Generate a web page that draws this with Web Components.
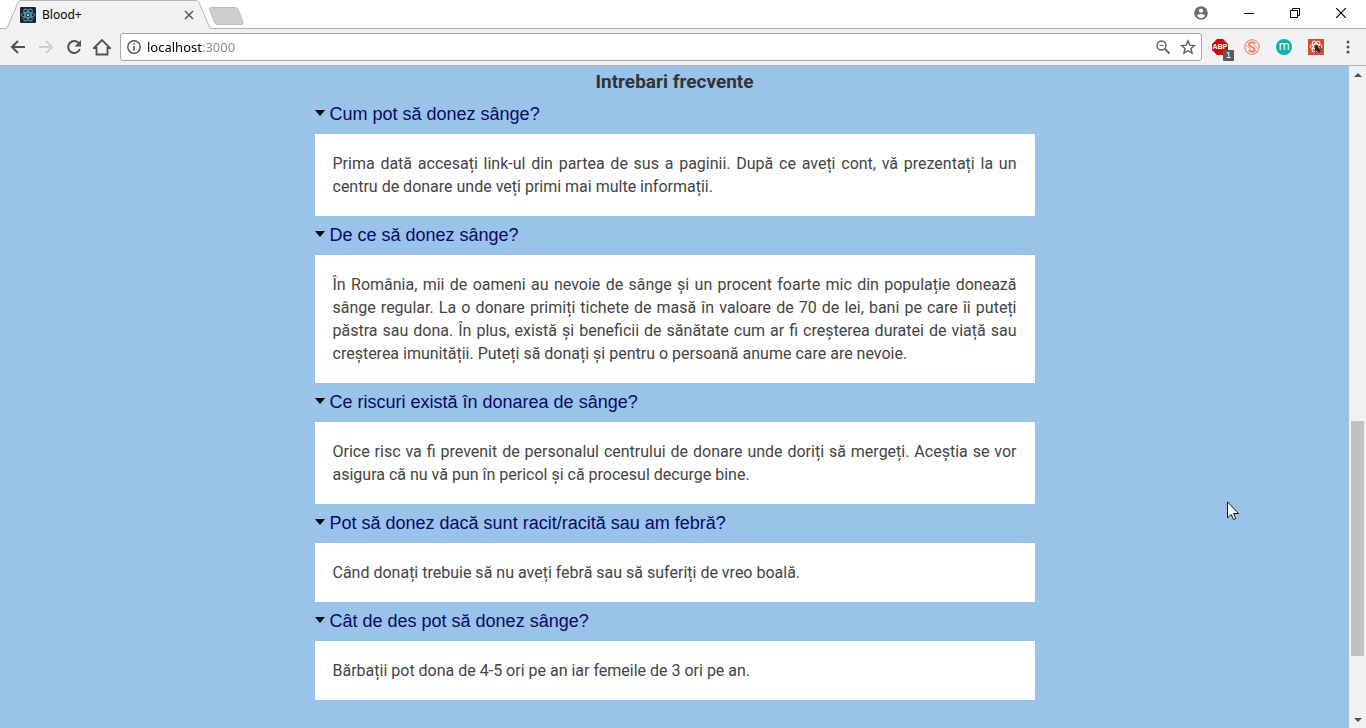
<!DOCTYPE html>
<html lang="ro">
<head>
<meta charset="utf-8">
<title>Blood+</title>
<style>
html, body { margin: 0; height: 100%; }
body { font-family: Roboto, "Liberation Sans", sans-serif; overflow: hidden; }
</style>
</head>
<body>
<browser-window>
  <tab-strip slot="tabs">Blood+</tab-strip>
  <tool-bar slot="toolbar" address="localhost:3000"></tool-bar>
  <faq-list>
    <span slot="title">Intrebari frecvente</span>
    <faq-item><span slot="question">Cum pot să donez sânge?</span>Prima dată accesați link-ul din partea de sus a paginii. După ce aveți cont, vă prezentați la un centru de donare unde veți primi mai multe informații.</faq-item>
    <faq-item><span slot="question">De ce să donez sânge?</span>În România, mii de oameni au nevoie de sânge și un procent foarte mic din populație donează sânge regular. La o donare primiți tichete de masă în valoare de 70 de lei, bani pe care îi puteți păstra sau dona. În plus, există și beneficii de sănătate cum ar fi creșterea duratei de viață sau creșterea imunității. Puteți să donați și pentru o persoană anume care are nevoie.</faq-item>
    <faq-item><span slot="question">Ce riscuri există în donarea de sânge?</span>Orice risc va fi prevenit de personalul centrului de donare unde doriți să mergeți. Aceștia se vor asigura că nu vă pun în pericol și că procesul decurge bine.</faq-item>
    <faq-item><span slot="question">Pot să donez dacă sunt racit/racită sau am febră?</span>Când donați trebuie să nu aveți febră sau să suferiți de vreo boală.</faq-item>
    <faq-item><span slot="question">Cât de des pot să donez sânge?</span>Bărbații pot dona de 4-5 ori pe an iar femeile de 3 ori pe an.</faq-item>
  </faq-list>
  <scroll-rail slot="rail"></scroll-rail>
  <mouse-pointer slot="pointer"></mouse-pointer>
</browser-window>

<template id="window-t">
  <style>
    :host { display: flex; flex-direction: column; height: 100vh; position: relative; background: #99c3e9; }
    main { flex: 1; min-height: 0; display: flex; }
    .view { flex: 1; overflow: hidden; }
  </style>
  <slot name="tabs"></slot>
  <slot name="toolbar"></slot>
  <main><div class="view"><slot></slot></div><slot name="rail"></slot></main>
  <slot name="pointer"></slot>
</template>

<template id="tabs-t">
  <style>
    :host { display: flex; height: 29px; background: #fff; box-shadow: inset 0 -1px #b2b2b2; font: 12px/18px "Noto Sans", sans-serif; color: #000; }
    button { border: 0; padding: 0; background: none; display: block; }
    svg { display: block; }
    .tab { width: 212px; display: grid; }
    .tab > * { grid-area: 1 / 1; }
    .row { display: flex; align-items: center; padding: 1px 16px 0 20px; }
    .name { flex: 1; padding-left: 6px; }
    .new { margin: 7px auto 0 -4px; align-self: flex-start; }
    .controls { display: flex; align-items: center; height: 26px; padding-right: 2px; }
    .controls button { width: 46px; display: grid; place-items: center; }
    .controls .profile { width: 50px; }
  </style>
  <div class="tab">
    <svg width="212" height="29" viewBox="0 0 212 29"><path d="M0 28.5H5Q7 28.5 8 26L18 2.5Q19 .5 21 .5H195Q198 .5 199 2.5L209 26Q210 28.5 212 28.5V29H0z" fill="#f2f2f2"/><path d="M0 28.5H5Q7 28.5 8 26L18 2.5Q19 .5 21 .5H195Q198 .5 199 2.5L209 26Q210 28.5 212 28.5" fill="none" stroke="#b2b2b2"/></svg>
    <div class="row">
      <svg width="16" height="16" viewBox="0 0 16 16"><rect width="16" height="16" rx="1" fill="#20232a"/><g fill="none" stroke="#53a9c4" stroke-width=".9"><ellipse cx="8" cy="8" rx="6.7" ry="2.6"/><ellipse cx="8" cy="8" rx="6.7" ry="2.6" transform="rotate(60 8 8)"/><ellipse cx="8" cy="8" rx="6.7" ry="2.6" transform="rotate(120 8 8)"/></g><circle cx="8" cy="8" r="1.3" fill="#61dafb"/></svg>
      <span class="name"><slot></slot></span>
      <button aria-label="Close tab"><svg width="14" height="14" viewBox="0 0 14 14"><path d="M3 3l8 8M11 3l-8 8" stroke="#555" stroke-width="1.5"/></svg></button>
    </div>
  </div>
  <button class="new" aria-label="New tab"><svg width="36" height="18" viewBox="0 0 36 18"><path d="M3 .5H27Q29 .5 30 2L35 15Q35.500 17.500 33 17.500H10Q7.500 17.500 6.500 15.500L1.500 2.500Q1 .5 3 .5z" fill="#cfcfcf" stroke="#bcbcbc"/></svg></button>
  <div class="controls">
    <button class="profile" aria-label="Profile"><svg width="14" height="14" viewBox="0 0 14 14"><circle cx="7" cy="7" r="6.800" fill="#6e6e6e"/><circle cx="7" cy="4.700" r="2.100" fill="#fff"/><path d="M2.800 9.800Q4 8 7 8T11.200 9.800Q9.500 12.200 7 12.200T2.800 9.800z" fill="#fff"/></svg></button>
    <button aria-label="Minimize"><svg width="10" height="10"><path d="M0 5.500h10" stroke="#000"/></svg></button>
    <button aria-label="Restore"><svg width="10" height="10" fill="none" stroke="#000"><path d="M.5 2.500h7v7h-7zM2.500 2.500v-2h7v7h-2"/></svg></button>
    <button aria-label="Close window"><svg width="10" height="10"><path d="M0 0l10 10M10 0L0 10" stroke="#000" stroke-width="1.200"/></svg></button>
  </div>
</template>

<template id="bar-t">
  <style>
    :host { display: flex; align-items: center; height: 37px; box-sizing: border-box; background: #f2f2f2; border-bottom: 1px solid #b2b2b2; padding: 0 4px; }
    button { border: 0; padding: 0; background: none; display: grid; place-items: center; width: 28px; height: 28px; position: relative; }
    svg { display: block; }
    label { flex: 1; display: flex; align-items: center; box-sizing: border-box; height: 28px; margin: 0 2px 0 4px; border: 1px solid #a8a8a8; border-radius: 3px; background: #fff; padding: 0 1px 0 5px; }
    input { flex: 1; min-width: 0; border: 0; padding: 0; margin-left: 5px; outline: 0; font: 13px/20px "Noto Sans", sans-serif; color: transparent; background: linear-gradient(90deg, #000 56px, #858585 56px); -webkit-background-clip: text; background-clip: text; }
    label button { width: 25px; }
    .ext { width: 32px; }
    .menu { width: 32px; margin-right: -2px; }
    .count { position: absolute; right: 2px; bottom: 0; width: 11px; height: 11px; background: #5c5c5c; border-radius: 1px; color: #fff; font: 9px/11px "Liberation Sans", sans-serif; }
    .badge { display: grid; place-items: center; width: 16px; height: 16px; color: #fff; }
    .abp { background: #c70d0d; clip-path: polygon(5px 0, 11px 0, 16px 5px, 16px 11px, 11px 16px, 5px 16px, 0 11px, 0 5px); font: bold 7px/16px "Liberation Sans", sans-serif; }
    .m { background: #04b5b0; border-radius: 50%; font: 12px/14px "Noto Sans", sans-serif; align-items: start; }
  </style>
  <button aria-label="Back"><svg width="16" height="16" viewBox="0 0 16 16" fill="none" stroke="#505050" stroke-width="2"><path d="M15 8H2M8 2L2 8l6 6"/></svg></button>
  <button aria-label="Forward"><svg width="16" height="16" viewBox="0 0 16 16" fill="none" stroke="#d0d0d0" stroke-width="2"><path d="M1 8h13M8 2l6 6-6 6"/></svg></button>
  <button aria-label="Reload"><svg width="16" height="16" viewBox="0 0 16 16"><path d="M13 4.500A6 6 0 1 0 13.800 10" fill="none" stroke="#505050" stroke-width="2"/><path d="M15 1v6.500H8.500z" fill="#505050"/></svg></button>
  <button aria-label="Home"><svg width="18" height="18" viewBox="0 0 18 18" fill="none" stroke="#505050" stroke-width="1.800"><path d="M1 10L9 2l8 8h-2.500v6.500h-11V10z"/></svg></button>
  <label>
    <svg width="16" height="16" viewBox="0 0 16 16"><circle cx="8" cy="8" r="6.200" fill="none" stroke="#505050" stroke-width="1.400"/><path d="M8 7v4.500M8 4.200v1.600" stroke="#505050" stroke-width="1.600"/></svg>
    <input type="text" aria-label="Address" spellcheck="false">
    <button aria-label="Zoom"><svg width="16" height="16" viewBox="0 0 16 16" fill="none" stroke="#606060"><circle cx="6.500" cy="6.500" r="4.500" stroke-width="1.400"/><path d="M10 10l4.500 4.500" stroke-width="1.800"/><path d="M4.500 6.500h4"/></svg></button>
    <button aria-label="Bookmark"><svg width="16" height="16" viewBox="0 0 16 16"><path d="M8 1.800l1.800 4.300 4.700.4-3.600 3 1.100 4.600L8 11.700l-4 2.400 1.100-4.600-3.600-3 4.700-.4z" fill="none" stroke="#606060" stroke-width="1.400"/></svg></button>
  </label>
  <button class="ext" aria-label="AdBlock Plus"><span class="badge abp">ABP</span><span class="count">1</span></button>
  <button class="ext" aria-label="Extension S"><svg width="16" height="16" viewBox="0 0 16 16" fill="none" stroke="#ef7b68"><circle cx="8" cy="8" r="7.300" fill="#fde9e4"/><path d="M11.500 4.500Q9 2.500 6.500 3.500T5.500 7Q7 8 9 8.500T10.500 12Q8.500 13.500 4.500 11.500" stroke-width="1.600"/><path d="M3 2.500l10 11M2 6l8 8M6 1.500l8 8" stroke-width=".7"/></svg></button>
  <button class="ext" aria-label="Extension M"><span class="badge m">m</span></button>
  <button class="ext" aria-label="React tools"><svg width="16" height="16" viewBox="0 0 16 16"><rect width="16" height="16" fill="#da4a38"/><g fill="none" stroke="#fff" stroke-width=".9"><ellipse cx="8" cy="7.500" rx="6" ry="2.500"/><ellipse cx="8" cy="7.500" rx="6" ry="2.500" transform="rotate(60 8 7.500)"/><ellipse cx="8" cy="7.500" rx="6" ry="2.500" transform="rotate(120 8 7.500)"/></g><path d="M6.500 6.500l2.500.5 3 3 .5 3-2.500.5-3-3z" fill="#302320"/><path d="M9 6l1.500 2M11 7.500l2 .5M7 11l1 2.500M12 9.500l1.500 1" stroke="#302320"/></svg></button>
  <button class="menu" aria-label="Menu"><svg width="4" height="14" viewBox="0 0 4 14" fill="#505050"><circle cx="2" cy="2" r="1.500"/><circle cx="2" cy="7" r="1.500"/><circle cx="2" cy="12" r="1.500"/></svg></button>
</template>

<template id="list-t">
  <style>
    :host { display: block; max-width: 720px; margin: 0 auto; }
    h2 { margin: 0; padding: 5px 0 2px; text-align: center; font-size: 19px; line-height: 22px; font-weight: 700; color: #333; }
  </style>
  <h2><slot name="title"></slot></h2>
  <slot></slot>
</template>

<template id="item-t">
  <style>
    :host { display: block; }
    summary { display: flex; align-items: center; gap: 5px; height: 39px; list-style: none; font: 18px/21px "Liberation Sans", sans-serif; color: #0a0a68; }
    summary::before { content: ""; border: solid transparent; border-width: 6px 5px 0; border-top-color: #000; margin-bottom: 4px; }
    summary::-webkit-details-marker { display: none; }
    p { margin: 0; padding: 18px; background: #fff; color: #444; font-size: 16px; line-height: 23px; text-align: justify; }
  </style>
  <details open><summary><slot name="question"></slot></summary><p><slot></slot></p></details>
</template>

<template id="rail-t">
  <style>
    :host { display: flex; flex-direction: column; width: 17px; background: #f1f1f1; }
    button { border: 0; padding: 0; background: none; height: 17px; display: grid; place-items: center; }
    .track { flex: 1; display: flex; flex-direction: column; padding: 0 2px; }
    .before { flex: 338; } .thumb { flex: 235; background: #c1c1c1; } .after { flex: 55; }
  </style>
  <button aria-label="Scroll up"><svg width="8" height="4"><path d="M0 4l4-4 4 4z" fill="#505050"/></svg></button>
  <div class="track"><div class="before"></div><div class="thumb"></div><div class="after"></div></div>
  <button aria-label="Scroll down"><svg width="8" height="4"><path d="M0 0l4 4 4-4z" fill="#505050"/></svg></button>
</template>

<template id="pointer-t">
  <style>:host { display: block; position: absolute; left: 1227px; top: 501px; pointer-events: none; } svg { display: block; }</style>
  <svg width="13" height="20" viewBox="0 0 13 20"><path d="M.5.8v16l3.700-3.400 2.300 5.100 2.300-1-2.200-5h5z" fill="#fff" stroke="#10182c"/></svg>
</template>

<script>
class TemplateElement extends HTMLElement {
  constructor() {
    super();
    this.attachShadow({ mode: "open" }).append(document.getElementById(this.constructor.template).content.cloneNode(true));
  }
}
customElements.define("browser-window", class extends TemplateElement { static template = "window-t"; });
customElements.define("tab-strip", class extends TemplateElement { static template = "tabs-t"; });
customElements.define("tool-bar", class extends TemplateElement {
  static template = "bar-t";
  connectedCallback() { this.shadowRoot.querySelector("input").value = this.getAttribute("address"); }
});
customElements.define("faq-list", class extends TemplateElement { static template = "list-t"; });
customElements.define("faq-item", class extends TemplateElement { static template = "item-t"; });
customElements.define("scroll-rail", class extends TemplateElement { static template = "rail-t"; });
customElements.define("mouse-pointer", class extends TemplateElement { static template = "pointer-t"; });
</script>
</body>
</html>
